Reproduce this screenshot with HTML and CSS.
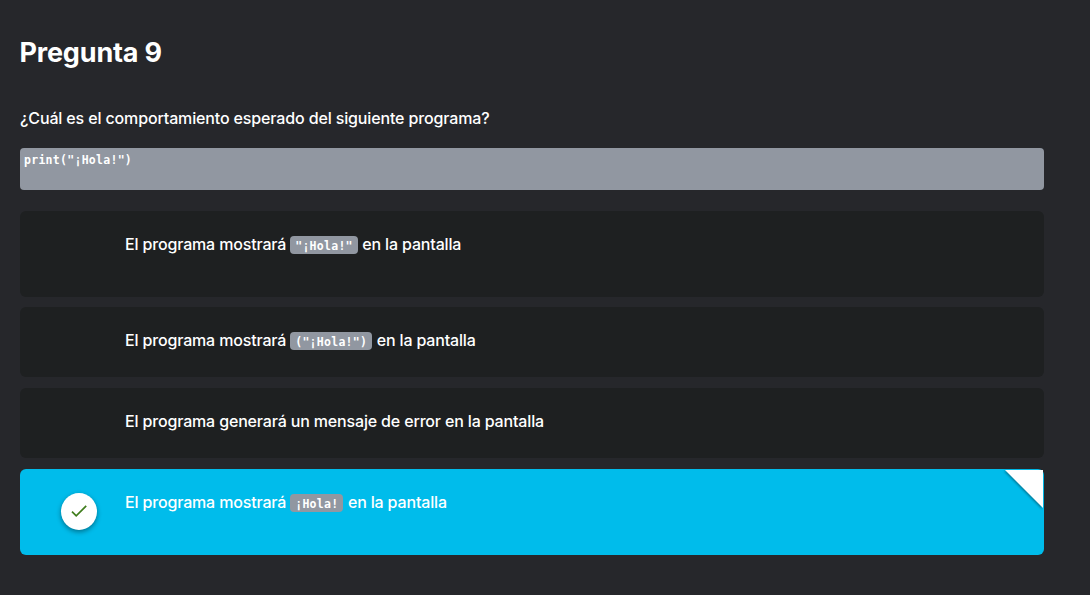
FILE: index.html
```html
<!DOCTYPE html>
<html lang="es">
<head>
<meta charset="utf-8">
<title>Pregunta 9</title>
<link rel="stylesheet" href="styles.css">
</head>
<body>
<main class="quiz">
  <h1 class="title"><span>Pregunta 9</span></h1>
  <p class="question"><span>¿Cuál es el comportamiento esperado del siguiente programa?</span></p>
  <pre class="program">print("¡Hola!")</pre>
  <div class="answers">
    <div class="answer tall"><div class="mark"></div><p class="text"><span class="lead">El programa mostrará</span><code>"¡Hola!"</code><span class="tail">en la pantalla</span></p></div>
    <div class="answer"><div class="mark"></div><p class="text"><span class="lead">El programa mostrará</span><code>("¡Hola!")</code><span class="tail">en la pantalla</span></p></div>
    <div class="answer"><div class="mark"></div><p class="text"><span class="full">El programa generará un mensaje de error en la pantalla</span></p></div>
    <div class="answer tall selected">
      <div class="mark"><div class="check"><svg width="16" height="14" viewBox="0 0 16 14"><path d="M1 6.7 5.2 10.9 15.2 0.9" fill="none" stroke="#3f7d1c" stroke-width="1.7"/></svg></div></div>
      <p class="text"><span class="lead">El programa mostrará</span><code>¡Hola!</code><span class="tail">en la pantalla</span></p>
      <svg class="corner" width="42" height="42" viewBox="0 0 42 42"><path d="M3 1H41V39Z" fill="#fff"/></svg>
    </div>
  </div>
</main>
</body>
</html>
```
FILE: styles.css
```css
* { box-sizing: border-box; }
body {
  margin: 0;
  height: 595px;
  background: #26272b;
  color: #fff;
  font-family: Inter, "Liberation Sans", sans-serif;
  font-size: 16px;
  font-weight: 450;
}
.quiz { width: 1044px; padding: 33px 0 0 20px; }
.title { margin: 0 0 0 -0.5px; height: 40px; font-size: 27px; line-height: 40px; font-weight: 700; letter-spacing: -0.18px; }
.question { margin: 33px 0 0; height: 24px; line-height: 24px; letter-spacing: -0.14px; }
.program {
  margin: 18px 0 0;
  height: 42px;
  padding: 4px;
  border-radius: 4px;
  background: #9197a1;
  font: 700 11.5px/17px "DejaVu Sans Mono", monospace;
  letter-spacing: 0.28px;
}
.answers { display: flex; flex-direction: column; gap: 11px; margin-top: 21px; }
.answer {
  position: relative;
  display: flex;
  height: 70px;
  border-radius: 6px;
  background: #1e2021;
}
.tall { height: 86px; }
.tall:first-child { margin-bottom: -1px; }
.mark { width: 105px; padding: 24px 0 0 41px; }
.text { display: flex; margin: 21px 0 0; height: 24px; line-height: 24px; letter-spacing: -0.16px; white-space: nowrap; }
.lead { width: 165px; }
code {
  height: 18px;
  margin: 4px 4.7px 0 0;
  padding: 1px 4.8px 0 5.2px;
  border-radius: 4px;
  background: #9197a1;
  font: 700 11.5px/18px "DejaVu Sans Mono", monospace;
  letter-spacing: 0.28px;
}
.selected { background: #00bceb; }
.check {
  display: flex;
  align-items: center;
  justify-content: center;
  width: 36px;
  height: 37px;
  border-radius: 50%;
  background: #fff;
  box-shadow: 0 2px 5px rgba(0, 0, 0, .4);
}
.corner { position: absolute; top: 0; right: 0; filter: drop-shadow(-1px 1px 1px rgba(0, 0, 0, .35)); }
```
